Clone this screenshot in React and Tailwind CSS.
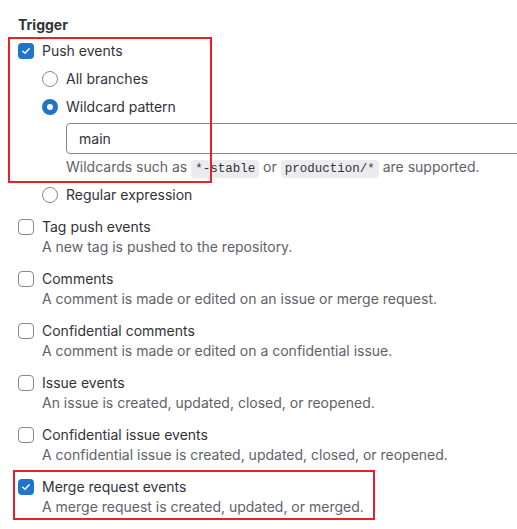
import React from 'react';

const events = [
  { label: 'Tag push events', desc: 'A new tag is pushed to the repository.' },
  { label: 'Comments', desc: 'A comment is made or edited on an issue or merge request.' },
  { label: 'Confidential comments', desc: 'A comment is made or edited on a confidential issue.' },
  { label: 'Issue events', desc: 'An issue is created, updated, closed, or reopened.' },
  { label: 'Confidential issue events', desc: 'A confidential issue is created, updated, closed, or reopened.' },
  { label: 'Merge request events', desc: 'A merge request is created, updated, or merged.', checked: true },
];

function Checkbox({ checked }) {
  if (checked) {
    return (
      <span className="mt-[2px] flex h-4 w-4 shrink-0 items-center justify-center rounded-[4px] bg-[#1f75cb]">
        <svg width="10" height="10" viewBox="0 0 10 10" fill="none">
          <path d="M1.8 5.2 4 7.3 8.2 2.8" stroke="white" strokeWidth="1.5" strokeLinecap="round" strokeLinejoin="round" />
        </svg>
      </span>
    );
  }
  return <span className="mt-[2px] h-4 w-4 shrink-0 rounded-[4px] border border-[#89888d] bg-white" />;
}

function Radio({ checked }) {
  if (checked) {
    return (
      <span className="mt-[2px] flex h-4 w-4 shrink-0 items-center justify-center rounded-full bg-[#1f75cb]">
        <span className="h-[6px] w-[6px] rounded-full bg-white" />
      </span>
    );
  }
  return <span className="mt-[2px] h-4 w-4 shrink-0 rounded-full border border-[#89888d] bg-white" />;
}

function Code({ children }) {
  return (
    <code className="rounded-[4px] bg-[#ececef] px-1 py-[2px] font-['Liberation_Mono',monospace] text-[12.5px] leading-4 text-[#333238]">
      {children}
    </code>
  );
}

export default function App() {
  return (
    <div className="relative h-[529px] w-[517px] overflow-hidden bg-white font-['Inter',sans-serif] text-sm leading-5 text-[#333238]">
      <div className="flex flex-col pl-[18px] pt-[15px]">
        <div className="font-bold">Trigger</div>

        {/* push events */}
        <div className="mt-[6px] flex items-start gap-2">
          <Checkbox checked />
          <span>Push events</span>
        </div>
        <div className="flex flex-col pl-6">
          <div className="mt-2 flex items-start gap-2">
            <Radio />
            <span>All branches</span>
          </div>
          <div className="mt-2 flex items-start gap-2">
            <Radio checked />
            <span>Wildcard pattern</span>
          </div>
          <div className="pl-6">
            <div className="mt-[6px] flex h-[31px] w-[480px] items-center rounded-[4px] border border-[#89888d] px-3">
              main
            </div>
            <div className="mt-[3px] h-5 whitespace-nowrap text-[#626168]">
              Wildcards such as <Code>*-stable</Code> or <Code>production/*</Code> are supported.
            </div>
          </div>
          <div className="mt-2 flex items-start gap-2">
            <Radio />
            <span>Regular expression</span>
          </div>
        </div>

        <div className="mt-3 flex flex-col gap-3">
          {events.map((e) => (
            <div key={e.label} className="flex items-start gap-2">
              <Checkbox checked={e.checked} />
              <div className="flex flex-col">
                <span>{e.label}</span>
                <span className="whitespace-nowrap text-[#626168]">{e.desc}</span>
              </div>
            </div>
          ))}
        </div>
      </div>

      {/* annotation boxes */}
      <div className="absolute left-[8px] top-[37px] h-[146px] w-[204px] border-2 border-[#e4222a]" />
      <div className="absolute left-[13px] top-[470px] h-[50px] w-[362px] border-2 border-[#e4222a]" />
    </div>
  );
}
